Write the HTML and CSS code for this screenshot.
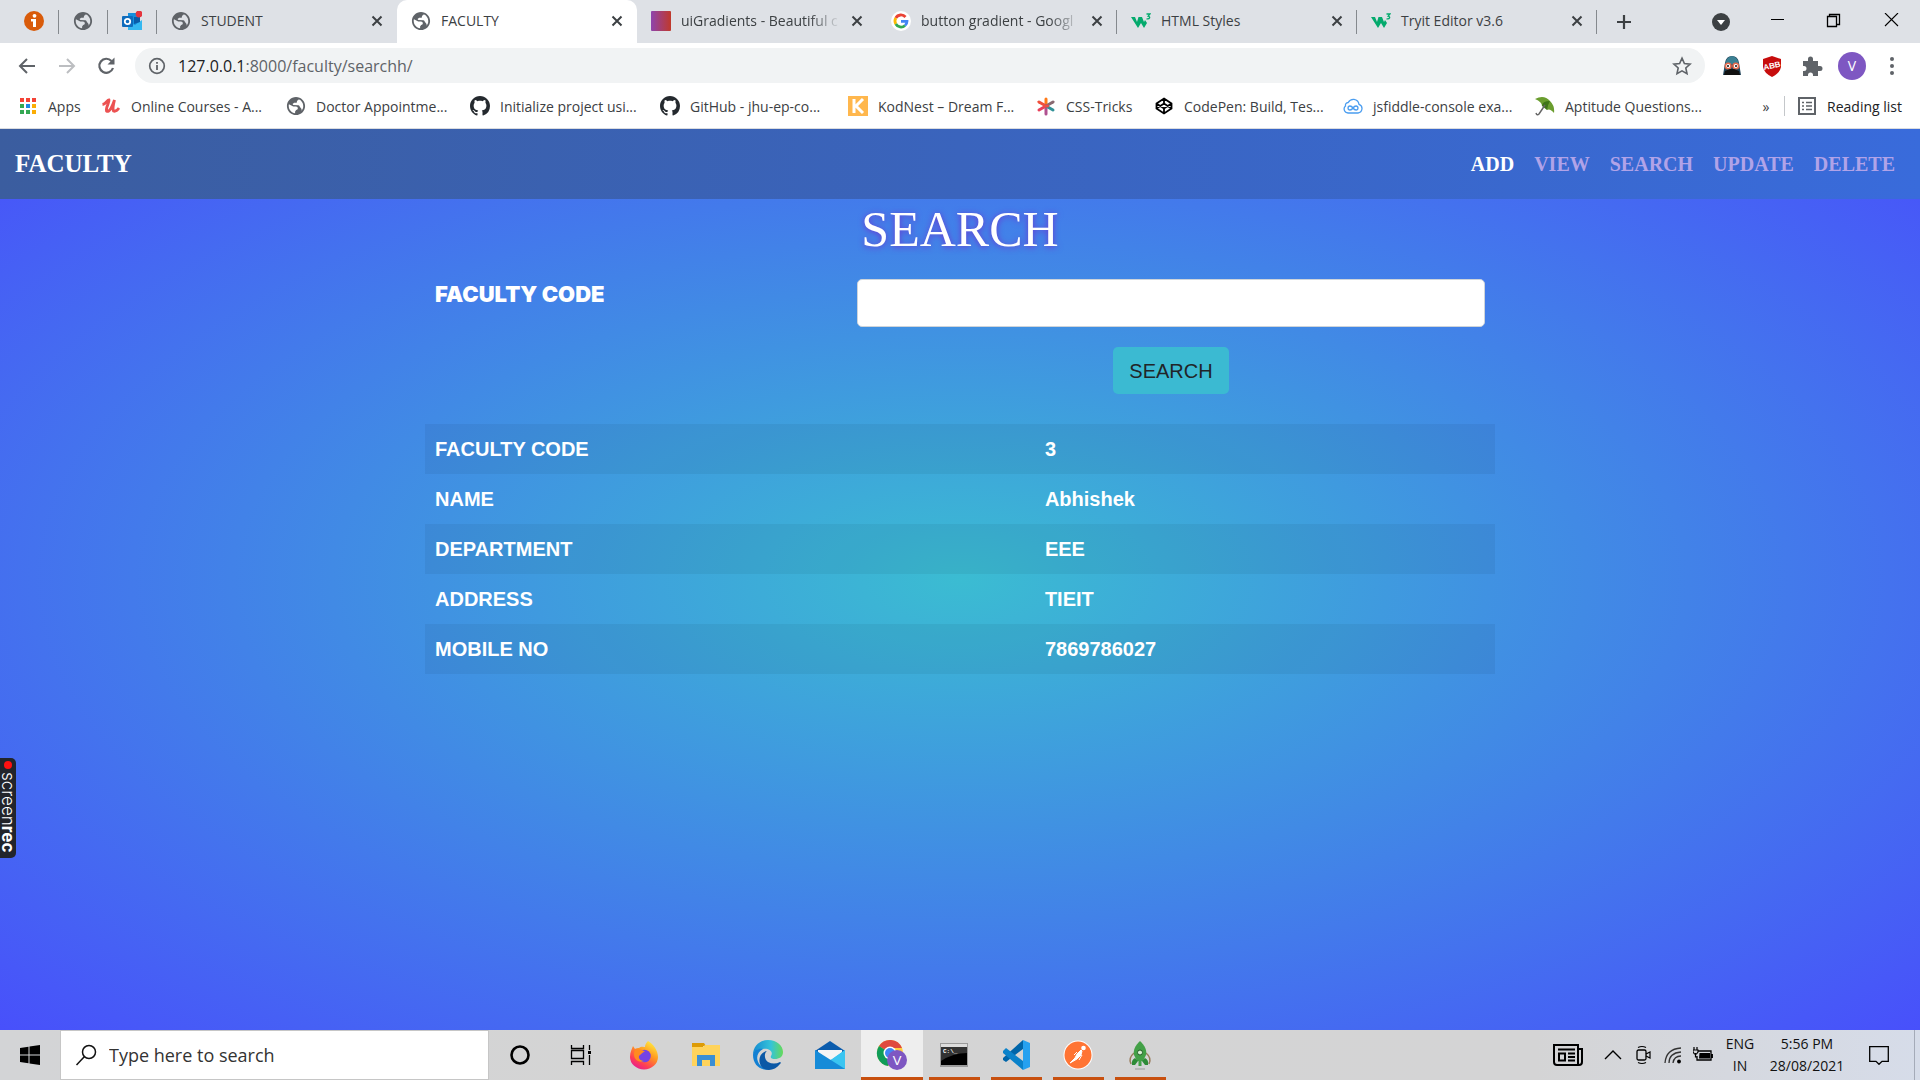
FILE: index.html
```html
<!DOCTYPE html>
<html lang="en">
<head>
<meta charset="utf-8">
<meta name="viewport" content="width=device-width, initial-scale=1">
<title>FACULTY</title>
<link rel="stylesheet" href="styles.css">
</head>
<body>
<svg class="defs" aria-hidden="true">
  <symbol id="globe" viewBox="1 1 22 22"><path fill="#5f6368" d="M12 2C6.480 2 2 6.480 2 12s4.480 10 10 10 10-4.480 10-10S17.520 2 12 2zm-1 17.930c-3.950-.49-7-3.850-7-7.930 0-.62.08-1.210.21-1.790L9 12.500h3c1.100 0 2 .9 2 2s-.9 1.800-1.800 1.800L11 18v1.930zm6.900-2.540c.8-1.390.2-2.390-.9-3.390-1-1-1-2.500-2.500-2.700L9 11l-.8-1.300L10 8.500h2c.55 0 1-.45 1-1 0-1 .5-1.800 1.600-2.100l.4-.81c2.930 1.190 5 4.060 5 7.410 0 2.080-.8 3.970-2.100 5.390z"/></symbol>
  <symbol id="x" viewBox="0 0 12 12"><path d="M1.500 1.500l9 9m0-9l-9 9" stroke="#3c4043" stroke-width="2" fill="none"/></symbol>
  <symbol id="w3" viewBox="0 0 20 20"><path d="M0 6h4l2 5 1.500-5h3.500l2 5 1-2 2 3-3 5-3-5-3 5z" fill="#04aa6d"/><path d="M15.500 3h3.500l-1.800 2.200c2.300.2 2 3.300-1.700 2.600" fill="none" stroke="#04aa6d" stroke-width="1.300"/></symbol>
  <symbol id="github" viewBox="0 0 16 16"><path fill="#24292e" d="M8 0C3.580 0 0 3.580 0 8c0 3.540 2.290 6.530 5.470 7.590.4.070.55-.17.55-.38 0-.19-.01-.82-.01-1.490-2.010.37-2.530-.49-2.690-.94-.09-.23-.48-.94-.82-1.130-.28-.15-.68-.52-.01-.53.63-.01 1.080.58 1.230.82.72 1.210 1.870.87 2.330.66.07-.52.28-.87.51-1.070-1.780-.2-3.640-.89-3.640-3.950 0-.87.31-1.590.82-2.150-.08-.2-.36-1.020.08-2.120 0 0 .67-.21 2.200.82.64-.18 1.320-.27 2-.27s1.360.09 2 .27c1.530-1.040 2.200-.82 2.200-.82.44 1.100.16 1.920.08 2.120.51.56.82 1.270.82 2.150 0 3.070-1.870 3.750-3.650 3.950.29.25.54.73.54 1.480 0 1.070-.01 1.930-.01 2.200 0 .21.15.46.55.38A8.010 8.010 0 0 0 16 8c0-4.420-3.580-8-8-8z"/></symbol>
</svg>

<header class="chrome">
  <div class="tab-strip">
    <div class="tab pinned"><svg class="fav" viewBox="0 0 20 20"><circle cx="10" cy="10" r="10" fill="#d95b0a"/><circle cx="10.500" cy="4.800" r="1.900" fill="#fff"/><path d="M7 8h5v8H9v-5.500H7z" fill="#fff"/></svg></div>
    <div class="tab pinned"><svg class="fav"><use href="#globe"/></svg></div>
    <div class="tab pinned"><svg class="fav" viewBox="0 0 20 20"><path d="M6 2h12v15H6z" fill="#1490df"/><path d="M6 11l7 3 7-5v10H6z" fill="#35b8f1"/><path d="M12 6h6v5l-6 2z" fill="#0a5ca8"/><rect y="5" width="11" height="11" rx="1" fill="#0f6cbd"/><circle cx="5.500" cy="10.500" r="2.700" fill="none" stroke="#fff" stroke-width="1.800"/><circle cx="17" cy="3" r="3.400" fill="#e5343d"/></svg></div>
    <div class="tab flush"><svg class="fav"><use href="#globe"/></svg><span class="tab-title">STUDENT</span><button class="tab-close" aria-label="Close STUDENT"><svg><use href="#x"/></svg></button></div>
    <div class="tab active"><svg class="fav"><use href="#globe"/></svg><span class="tab-title">FACULTY</span><button class="tab-close" aria-label="Close FACULTY"><svg><use href="#x"/></svg></button></div>
    <div class="tab"><svg class="fav" viewBox="0 0 20 20"><defs><linearGradient id="uig"><stop stop-color="#8e44ad"/><stop offset="1" stop-color="#c0392b"/></linearGradient></defs><rect width="20" height="20" rx="1" fill="url(#uig)"/></svg><span class="tab-title fade">uiGradients - Beautiful c</span><button class="tab-close" aria-label="Close uiGradients"><svg><use href="#x"/></svg></button></div>
    <div class="tab"><svg class="fav" viewBox="0 0 20 20"><circle cx="10" cy="10" r="10" fill="#fff"/><g fill="none" stroke-width="2.800"><path d="M14.500 6A6 6 0 0 0 4.800 7" stroke="#ea4335"/><path d="M4.800 7a6 6 0 0 0 0 6" stroke="#fbbc05"/><path d="M4.800 13a6 6 0 0 0 9.200 1.500" stroke="#34a853"/><path d="M14 14.500q2-1.600 2-4.200h-6" stroke="#4285f4"/></g></svg><span class="tab-title fade">button gradient - Googl</span><button class="tab-close" aria-label="Close button gradient"><svg><use href="#x"/></svg></button></div>
    <div class="tab"><svg class="fav"><use href="#w3"/></svg><span class="tab-title">HTML Styles</span><button class="tab-close" aria-label="Close HTML Styles"><svg><use href="#x"/></svg></button></div>
    <div class="tab"><svg class="fav"><use href="#w3"/></svg><span class="tab-title">Tryit Editor v3.6</span><button class="tab-close" aria-label="Close Tryit Editor"><svg><use href="#x"/></svg></button></div>
    <button class="new-tab" aria-label="New tab"><svg viewBox="0 0 16 16"><path d="M8 1v14M1 8h14" stroke="#3c4043" stroke-width="2.200"/></svg></button>
    <div class="window-controls">
      <button aria-label="Search tabs"><svg viewBox="0 0 18 18"><circle cx="9" cy="9" r="9" fill="#3c4043"/><path d="M5 7h8l-4 5z" fill="#fff"/></svg></button>
      <button aria-label="Minimize"><svg viewBox="0 0 18 18"><path d="M2 6.500h13" stroke="#000"/></svg></button>
      <button aria-label="Restore"><svg viewBox="0 0 18 18"><path d="M1.500 3.500h9v10h-9zM3.500 3V1.500h10v10H11" stroke="#000" fill="none" stroke-width="1.300"/></svg></button>
      <button aria-label="Close window"><svg viewBox="0 0 18 18"><path d="M2 0l13 13M15 0L2 13" stroke="#000" stroke-width="1.100"/></svg></button>
    </div>
  </div>

  <div class="toolbar">
    <button class="tool" aria-label="Back"><svg viewBox="0 0 20 20"><path d="M18 10H3m7-7l-7 7 7 7" fill="none" stroke="#5f6368" stroke-width="2"/></svg></button>
    <button class="tool" aria-label="Forward"><svg viewBox="0 0 20 20"><path d="M2 10h15m-7-7l7 7-7 7" fill="none" stroke="#bcbec1" stroke-width="2"/></svg></button>
    <button class="tool" aria-label="Reload"><svg viewBox="0 0 20 20"><path d="M14.500 5A7 7 0 1 0 16 12" fill="none" stroke="#5f6368" stroke-width="2.200"/><path d="M17.500 1.500v7h-7z" fill="#5f6368"/></svg></button>
    <div class="omnibox">
      <svg viewBox="0 0 18 18"><circle cx="9" cy="9" r="7.300" fill="none" stroke="#5f6368" stroke-width="1.700"/><path d="M9 8v5M9 5v1.700" stroke="#5f6368" stroke-width="1.800"/></svg>
      <span class="url"><b>127.0.0.1</b>:8000/faculty/searchh/</span>
      <svg class="star" viewBox="0 0 20 20"><path d="M10 2.200l2.400 5.300 5.700.6-4.300 3.900 1.200 5.700-5-2.900-5 2.900L6.200 12 1.900 8.100l5.700-.6z" fill="none" stroke="#5f6368" stroke-width="1.600"/></svg>
    </div>
    <div class="extensions">
      <svg viewBox="0 0 22 22"><path d="M2 20L4 8q1-7 7-7t7 7l2 12z" fill="#24475c"/><path d="M4.500 9q.5-7 6.500-8 6 1 6.500 8z" fill="#3a8093"/><circle cx="7.200" cy="11" r="2.800" fill="#fff" stroke="#e66a4c" stroke-width="1.600"/><circle cx="14.800" cy="11" r="2.800" fill="#fff" stroke="#e66a4c" stroke-width="1.600"/><path d="M4 16l5-2h4l5 2 1 4H3z" fill="#111"/><path d="M6 11h2m6 0h2" stroke="#111" stroke-width="1.500"/></svg>
      <svg viewBox="0 0 22 22"><path d="M11 1l9 3v8q-1 6-9 10Q3 18 2 12V4z" fill="#c70d0d"/><text class="badge-text" x="11" y="13.500" transform="rotate(-12 11 11)">ABB</text></svg>
      <svg viewBox="0 0 22 22"><path d="M2 6h5V4a2.500 2.500 0 0 1 5 0v2h5v5h2a2.500 2.500 0 0 1 0 5h-2v5h-5v-1a2.500 2.500 0 0 0-5 0v1H2v-5h1a2.500 2.500 0 0 0 0-5H2z" fill="#5f6368"/></svg>
      <button class="avatar">V</button>
      <svg viewBox="0 0 22 22"><g fill="#5f6368"><circle cx="11" cy="4" r="2"/><circle cx="11" cy="11" r="2"/><circle cx="11" cy="18" r="2"/></g></svg>
    </div>
  </div>

  <nav class="bookmarks" aria-label="Bookmarks">
    <div class="bookmark-list">
      <a href="#"><svg viewBox="0 0 20 20"><path d="M2 2h4v4H2zm6 0h4v4H8zm6 0h4v4h-4z" fill="#f44336"/><path d="M2 8h4v4H2zm0 6h4v4H2zM8 14h4v4H8z" fill="#34a853"/><path d="M8 8h4v4H8z" fill="#1e88e5"/><path d="M14 8h4v4h-4zm0 6h4v4h-4z" fill="#fbad04"/></svg>Apps</a>
      <a href="#"><svg viewBox="0 0 20 20"><path d="M1.500 8.500C5 8 6 4 8 4c1 2-3.500 7-2.500 11 3 2 6-5 8-11-1 4-2 9-1 11 2 1 4-1 5.500-3" fill="none" stroke="#ec5252" stroke-width="2.800"/></svg>Online Courses - A...</a>
      <a href="#"><svg><use href="#globe"/></svg>Doctor Appointme...</a>
      <a href="#"><svg><use href="#github"/></svg>Initialize project usi...</a>
      <a href="#"><svg><use href="#github"/></svg>GitHub - jhu-ep-co...</a>
      <a href="#"><svg viewBox="0 0 20 20"><path d="M0 0h20v20H0z" fill="#ffb74d"/><path d="M6 3v14M15 3l-7 7 7 7" stroke="#fff" stroke-width="3" fill="none"/></svg>KodNest – Dream F...</a>
      <a href="#"><svg viewBox="0 0 20 20"><g stroke-width="3" stroke-linecap="round"><path d="M10 10V3" stroke="#ff7a18"/><path d="M10 10v8" stroke="#b05090"/><path d="M10 10L3 6" stroke="#f0503c"/><path d="M10 10l-7 4" stroke="#e8405a"/><path d="M10 10l7-4" stroke="#8a6a72"/><path d="M10 10l7 4" stroke="#319197"/><path d="M8.500 10h3" stroke="#ee4d46"/></g></svg>CSS-Tricks</a>
      <a href="#"><svg viewBox="0 0 20 20"><path d="M10 2.500l7.500 5v5l-7.500 5-7.500-5v-5zM10 2.500v5m0 5v5M2.500 7.500l7.500 5 7.500-5M2.500 12.500l7.500-5 7.500 5" fill="none" stroke="#000" stroke-width="1.800"/></svg>CodePen: Build, Tes...</a>
      <a href="#"><svg viewBox="0 0 20 20"><path d="M5 17a4 4 0 0 1-2.500-7Q2 7 5.200 6.500 7 3 11 3.300q4.500.7 5 5A4.500 4.500 0 0 1 15 17z" fill="none" stroke="#4a9df0" stroke-width="1.300"/><path d="M10 12c-2-3-5-2.500-5 0s3 3 5 0 5-2.500 5 0-3 3-5 0z" fill="none" stroke="#4a9df0" stroke-width="1.400"/></svg>jsfiddle-console exa...</a>
      <a href="#"><svg viewBox="0 0 20 20"><path d="M0 3Q9-2 15 5q5 5 4 12-4-5-7-3 0-4-5-4 0-4-7-7z" fill="#6a9d2e"/><path d="M7 10q0-5 8-5-2 3-3 9z" fill="#3f7518"/><path d="M10 9l-6 9q-2 2-3-1" fill="none" stroke="#666" stroke-width="1.500"/></svg>Aptitude Questions...</a>
    </div>
    <button class="more">»</button>
    <button class="reading"><svg viewBox="0 0 20 20"><rect x="2" y="2" width="16" height="16" fill="none" stroke="#5f6368" stroke-width="2"/><path d="M5 6.500h2m2 0h6M5 10h2m2 0h6M5 13.500h2m2 0h6" stroke="#5f6368" stroke-width="1.700"/></svg>Reading list</button>
  </nav>
</header>

<main class="page">
  <nav class="site-nav">
    <a class="brand" href="#">FACULTY</a>
    <div class="links">
      <a class="current" href="#">ADD</a>
      <a href="#">VIEW</a>
      <a href="#">SEARCH</a>
      <a href="#">UPDATE</a>
      <a href="#">DELETE</a>
    </div>
  </nav>
  <h1>SEARCH</h1>
  <div class="container">
    <form class="search-form">
      <label for="code">FACULTY CODE</label>
      <input id="code" type="text">
      <button type="button">SEARCH</button>
    </form>
    <table>
      <tbody>
        <tr><th scope="row">FACULTY CODE</th><td>3</td></tr>
        <tr><th scope="row">NAME</th><td>Abhishek</td></tr>
        <tr><th scope="row">DEPARTMENT</th><td>EEE</td></tr>
        <tr><th scope="row">ADDRESS</th><td>TIEIT</td></tr>
        <tr><th scope="row">MOBILE NO</th><td>7869786027</td></tr>
      </tbody>
    </table>
  </div>
  <div class="recorder"><span class="dot"></span><span>screen<b>rec</b></span></div>
</main>

<footer class="taskbar">
  <button class="start" aria-label="Start"><svg viewBox="0 0 20 20"><path d="M0 3l8.500-1.200v7.700H0zm9.500-1.400L20 0v9.500H9.500zM0 10.500h8.500v7.700L0 17zm9.500 0H20V20L9.500 18.400z"/></svg></button>
  <label class="task-search"><svg viewBox="0 0 22 22"><circle cx="14" cy="8" r="6.500" fill="none" stroke="#111" stroke-width="1.500"/><path d="M9.500 12.500L1.500 21" stroke="#111" stroke-width="1.500"/></svg><input type="text" placeholder="Type here to search" aria-label="Type here to search"></label>
  <div class="apps">
    <button aria-label="Cortana"><svg viewBox="0 0 30 30"><circle cx="15" cy="15" r="8.500" fill="none" stroke="#000" stroke-width="2.600"/></svg></button>
    <button aria-label="Task View"><svg viewBox="0 0 30 30"><path d="M4.500 5v3.500h12V5M4.500 25v-3.500h12V25M4.500 10.500h12v8h-12zM22.500 5v5m0 5v10" fill="none" stroke="#000" stroke-width="1.300"/><path d="M21 11h3v3h-3z"/></svg></button>
    <button aria-label="Firefox"><svg viewBox="0 0 30 30"><defs><linearGradient id="ff" x1=".8" y1="0" x2=".2" y2="1"><stop stop-color="#fff044"/><stop offset=".4" stop-color="#ff9a1f"/><stop offset=".75" stop-color="#ff3d55"/><stop offset="1" stop-color="#e0189c"/></linearGradient></defs><path d="M19 1c5 3 10 9 10 16a14 12.500 0 0 1-28 0C1 12 3 9 4 6l2 3c1-1 3-1 4-1 2-2 5-1 6-1 0-2 1-4 3-6z" fill="url(#ff)"/><circle cx="15.500" cy="16" r="6.300" fill="#7542e5"/><path d="M6 10c5-2 8 0 10 2-3 0-3 2-5 3-3 2 0 6 4 6-8 3-12-5-9-11z" fill="#ff8b20"/></svg></button>
    <button aria-label="File Explorer"><svg viewBox="0 0 30 30"><path d="M1 3h12l2 3h-3v4H1z" fill="#dd9b06"/><path d="M1 7h11l2-2h15v21H1z" fill="#ffd35b"/><path d="M6 26V15h18v11h-5v-6h-8v6z" fill="#3b8fd4"/></svg></button>
    <button aria-label="Edge"><svg viewBox="0 0 30 30"><defs><linearGradient id="ed" x1="0" x2="1"><stop stop-color="#158bd1"/><stop offset=".6" stop-color="#35c3d9"/><stop offset="1" stop-color="#66da58"/></linearGradient></defs><path d="M0 15C0 6 7 0 15 0c9 0 15 6 15 12 0 5-4 7-8 7-3 0-5-1-4-3 3-5-3-8-8-7-6 0-10 3-10 6z" fill="url(#ed)"/><path d="M0 15c0-5 6-7 10-6-6 3-8 10-3 16 3 3 7 4 11 4C8 32 0 25 0 15z" fill="#1380d3"/><path d="M14 11c-3 2-3 8 1 11 4 2 8 2 12 0 1 0 1 1 0 2-5 7-15 8-19 2C4 19 8 12 14 11z" fill="#0b58a6"/></svg></button>
    <button aria-label="Mail"><svg viewBox="0 0 30 30"><path d="M0 11L15 1l15 10v3H0z" fill="#0b5cad"/><path d="M3 10h24v10H3z" fill="#f5f5f5"/><path d="M0 10l15 11 15-11v19H0z" fill="#2aa9e8"/><path d="M0 29l17-10L30 10v19z" fill="#3ac5f1"/><path d="M0 10l30 19H0z" fill="#168bd8"/></svg></button>
    <button class="open focused" aria-label="Chrome"><svg viewBox="0 0 32 32"><circle cx="14" cy="14" r="13" fill="#ffcd40"/><path d="M14 14L3 7a13 13 0 0 1 23 2H14z" fill="#e04a3f"/><path d="M14 14L3 7a13 13 0 0 0 9 20l4-7z" fill="#109d58"/><circle cx="14" cy="14" r="6.500" fill="#fff"/><circle cx="14" cy="14" r="5" fill="#4285f4"/><circle cx="21" cy="21" r="10" fill="#7e57c2"/><text class="chrome-user" x="21" y="26">V</text></svg></button>
    <button class="open" aria-label="Command Prompt"><svg viewBox="0 0 30 30"><path d="M1 3h28v24H1z" fill="#9b9b9b"/><path d="M2 4h26v3H2z" fill="#ddd"/><path d="M2 7h26v18H2z"/><path d="M2 7h26v6q-14 0-26 8z" fill="#333"/><text class="prompt" x="4" y="13">C:\_</text></svg></button>
    <button class="open" aria-label="Visual Studio Code"><svg viewBox="0 0 30 30"><path d="M22 0v9L5 22l-3-2v-2z" fill="#0065a9"/><path d="M2 11l3-3L22 21v9L2 13z" fill="#0b82ca"/><path d="M22 0l7 3v24l-7 3z" fill="#26a1f0"/></svg></button>
    <button class="open" aria-label="Postman"><svg viewBox="0 0 30 30"><circle cx="15" cy="15" r="14.500" fill="#fff"/><circle cx="15" cy="15" r="13.500" fill="#ff7434"/><circle cx="20.500" cy="8" r="2.300" fill="#fff"/><path d="M18 10l-4 4-2 4-5 5 7-4 4-4 1-4zM14 12l-3 3m8 0l-3 5" stroke="#fff" fill="#fff"/></svg></button>
    <button class="open" aria-label="Rocket"><svg viewBox="0 0 30 30"><path d="M9 13q-6 5-3 11M21 13q6 5 3 11" fill="none" stroke="#9a7c5c" stroke-width="1.500"/><path d="M15 1c5 5 7 9 6 14l-3 6h-6l-3-6c-1-5 1-9 6-14z" fill="#43a047"/><path d="M10 18q-4 2-3 7h3l3-4zm10 0q4 2 3 7h-3l-3-4z" fill="#2e8b37"/><circle cx="15" cy="12.500" r="2.500" fill="#d9f0d5" stroke="#256029"/><path d="M15 19v7" stroke="#43a047" stroke-width="3"/><path d="M10 29h10" stroke="#999"/></svg></button>
  </div>
  <div class="tray">
    <button class="news" aria-label="News"><svg viewBox="0 0 30 22"><path d="M1 1h24v20H4q-3 0-3-3zM25 5h4v13q0 3-3 3h-2" fill="none" stroke="#000" stroke-width="2"/><path d="M5 5.500h17M15 9.500h7M15 13h7M15 16.500h7" stroke="#000" stroke-width="1.800"/><path d="M6 9.500h6v7H6z" fill="none" stroke="#000" stroke-width="2"/></svg></button>
    <button aria-label="Hidden icons"><svg viewBox="0 0 20 20"><path d="M2 14l8-8 8 8" fill="none" stroke="#000" stroke-width="1.400"/></svg></button>
    <button aria-label="Meet Now"><svg viewBox="0 0 20 20"><rect x="4" y="5" width="9" height="10" rx="1.500" fill="none" stroke="#000" stroke-width="1.300"/><path d="M13 9l4-2v6l-4-2M5 2.500q4-2 8 0M5 17.500q4 2 8 0" fill="none" stroke="#000" stroke-width="1.200"/></svg></button>
    <button aria-label="Network"><svg viewBox="0 0 20 20"><path d="M2 18Q3 4 18 3M6 18Q6 8 18 7M10 18q1-7 8-7" fill="none" stroke="#333" stroke-width="1.300"/><circle cx="16" cy="16.500" r="1.900"/></svg></button>
    <button aria-label="Battery"><svg viewBox="0 0 20 20"><path d="M5 6h13v9H4v-4M19.300 9v4" fill="none" stroke="#000" stroke-width="1.300"/><path d="M6.500 8H17v5.500H6z"/><path d="M1 2v3m3-3v3M0 5h5v2l-1.500 2h-2L0 7zM2.500 8v4H4" fill="none" stroke="#000" stroke-width="1.200"/></svg></button>
    <div class="lang">ENG<br>IN</div>
    <div class="clock">5:56 PM<br>28/08/2021</div>
    <button class="notes" aria-label="Notifications"><svg viewBox="0 0 20 20"><path d="M.7 1.700h18.600v14.600H13l-3 3-3-3H.7z" fill="none" stroke="#000" stroke-width="1.300"/></svg></button>
  </div>
</footer>
</body>
</html>
```
FILE: styles.css
```css
* { box-sizing: border-box; }
body {
  margin: 0;
  min-height: 100vh;
  display: flex;
  flex-direction: column;
  font-family: "Open Sans", "Noto Sans", sans-serif;
  font-size: 14px;
  color: #3c4043;
}
button { border: 0; padding: 0; background: none; font: inherit; color: inherit; }
a { color: inherit; text-decoration: none; }
svg { display: block; flex: none; }
.defs { position: absolute; width: 0; height: 0; }

/* Browser window */
.chrome { background: #fff; border-bottom: 1px solid #dadce0; }
.tab-strip { display: flex; height: 43px; padding-left: 10px; background: #dee1e6; }
.tab {
  flex: 0 1 240px;
  min-width: 0;
  display: flex;
  align-items: center;
  gap: 10px;
  padding: 0 14px 2px;
  background: linear-gradient(#85898e, #85898e) right center / 1px 24px no-repeat;
}
.tab.pinned { flex: 0 0 49px; }
.tab.flush { background: #dee1e6; border-radius: 0 0 10px 0; }
.tab.active { background: #fff; border-radius: 10px 10px 0 0; }
.tab.active + .tab { background-image: none; border-radius: 0 0 0 10px; }
.fav { width: 20px; height: 20px; }
.tab-title { flex: 1; min-width: 0; white-space: nowrap; }
.fade { mask-image: linear-gradient(to right, #000 80%, transparent); }
.tab-close svg { width: 12px; height: 12px; }
.new-tab { width: 54px; display: flex; align-items: center; justify-content: center; }
.new-tab svg { width: 16px; height: 16px; }
.window-controls { display: flex; margin-left: auto; }
.window-controls button { width: 57px; display: flex; align-items: center; justify-content: center; }
.window-controls svg { width: 18px; height: 18px; }

.toolbar { display: flex; align-items: center; height: 45px; padding-left: 7px; }
.tool { width: 40px; display: flex; justify-content: center; }
.tool svg { width: 20px; height: 20px; }
.omnibox {
  flex: 1;
  display: flex;
  align-items: center;
  gap: 12px;
  height: 35px;
  margin-left: 8px;
  padding: 0 13px;
  border-radius: 18px;
  background: #f1f3f4;
}
.omnibox svg { width: 18px; height: 18px; }
.omnibox .star { width: 20px; height: 20px; }
.url { flex: 1; font-size: 16px; color: #5f6368; }
.url b { font-weight: 400; color: #202124; }
.extensions { display: flex; align-items: center; gap: 18px; padding: 0 17px 0 16px; }
.extensions svg { width: 22px; height: 22px; }
.badge-text { font: bold 8px "Liberation Sans", sans-serif; fill: #fff; text-anchor: middle; }
.avatar { width: 28px; height: 28px; margin: 0 -3px; border-radius: 50%; background: #7e57c2; color: #fff; }

.bookmarks { display: flex; align-items: center; height: 40px; padding: 0 18px 4px; }
.bookmark-list {
  flex: 1;
  display: grid;
  grid-template-columns: 83px 185px 184px 190px 188px 188px 118px 189px 192px 1fr;
  white-space: nowrap;
}
.bookmark-list a, .reading { display: flex; align-items: center; gap: 10px; }
.bookmark-list svg, .reading svg { width: 20px; height: 20px; }
.more { width: 36px; }
.reading { padding-left: 12px; border-left: 1px solid #c4c7ca; color: #202124; }

/* Faculty page */
.page {
  position: relative;
  flex: 1;
  background: radial-gradient(ellipse at center, #3bbcd2, #4850fb);
  font-family: "Liberation Sans", Arial, sans-serif;
  font-size: 20px;
  line-height: 30px;
  color: #fff;
}
.site-nav {
  display: flex;
  align-items: center;
  justify-content: space-between;
  height: 70px;
  padding: 0 25px 0 15px;
  background: linear-gradient(to right, #3b5d9f, #396bdb);
  font-family: "Liberation Serif", "Times New Roman", serif;
  font-weight: bold;
}
.brand { font-size: 25px; }
.links { display: flex; gap: 20px; color: #b1a3e8; }
.links .current { color: #fff; }
h1 {
  margin: 0;
  font: 50px/60px "Liberation Serif", "Times New Roman", serif;
  text-align: center;
  text-shadow: 0 1px 6px #6a35d0;
}
.container { width: 56%; max-width: 1070px; margin: 20px auto 0; }
.search-form {
  display: grid;
  grid-template-columns: 434fr 631fr;
  row-gap: 20px;
  padding-right: 10px;
}
.search-form label { padding-left: 10px; font-family: Inter, "Liberation Sans", sans-serif; font-size: 22px; font-weight: 900; }
.search-form input {
  width: 100%;
  height: 48px;
  padding: 8px 15px;
  border: 1px solid #ced4da;
  border-radius: 5px;
  background: #fff;
  font: inherit;
}
.search-form button {
  grid-column: 2;
  justify-self: center;
  height: 47px;
  padding: 0 16px;
  border-radius: 5px;
  background: #3bbad2;
  color: #212529;
}
table { width: 100%; margin-top: 30px; border-collapse: collapse; table-layout: fixed; }
th, td { padding: 10px; font-weight: bold; text-align: left; }
th { width: 57%; }
tr:nth-child(odd) { background: rgba(0, 0, 0, 0.05); }

/* Floating recorder handle on the screen's left edge */
.recorder {
  position: absolute;
  left: 0;
  bottom: 172px;
  display: flex;
  align-items: center;
  gap: 3px;
  height: 100px;
  padding: 3px 0;
  border-radius: 0 5px 5px 0;
  background: #22252b;
  font: 17px/16px Inter, sans-serif;
  font-weight: 300;
  writing-mode: vertical-rl;
}
.recorder b { font-weight: 700; }
.recorder .dot { width: 8px; height: 8px; border-radius: 50%; background: #f11; }

/* Windows taskbar */
.taskbar {
  display: flex;
  height: 50px;
  background: linear-gradient(to right, #d3d4d6, #d4d4d4 35%, #d4d4d5 80%, #d6dce9);
  color: #111;
}
.start { width: 60px; display: flex; align-items: center; justify-content: center; }
.start svg { width: 20px; height: 20px; }
.task-search {
  display: flex;
  align-items: center;
  gap: 12px;
  width: 429px;
  padding: 0 14px;
  border: 1px solid #c6c6c6;
  background: #fff;
}
.task-search svg { width: 22px; height: 22px; }
.task-search input { flex: 1; min-width: 0; padding: 0; border: 0; outline: 0; font: inherit; font-size: 18px; }
.task-search input::placeholder { color: #333; }
.apps { display: flex; }
.apps button { width: 62px; display: flex; align-items: center; justify-content: center; }
.apps svg { width: 30px; height: 30px; }
.apps .open { background: linear-gradient(#c8500f, #c8500f) center bottom / 51px 3px no-repeat; }
.apps .focused { background-color: #eee; background-size: 100% 3px; }
.apps .focused svg { width: 32px; height: 32px; }
.chrome-user { font: 13px "Liberation Sans", sans-serif; fill: #fff; text-anchor: middle; }
.prompt { font: bold 6px "Liberation Mono", monospace; fill: #fff; }
.tray {
  display: flex;
  align-items: center;
  margin-left: auto;
  margin-right: 5px;
  padding-right: 8px;
  border-right: 1px solid #a5abb8;
  line-height: 22px;
  text-align: center;
}
.tray button { width: 30px; display: flex; justify-content: center; }
.tray svg { width: 20px; height: 20px; }
.tray .news { width: 60px; }
.tray .news svg { width: 30px; height: 22px; }
.lang { width: 44px; }
.clock { width: 90px; }
.tray .notes { width: 54px; }
```
